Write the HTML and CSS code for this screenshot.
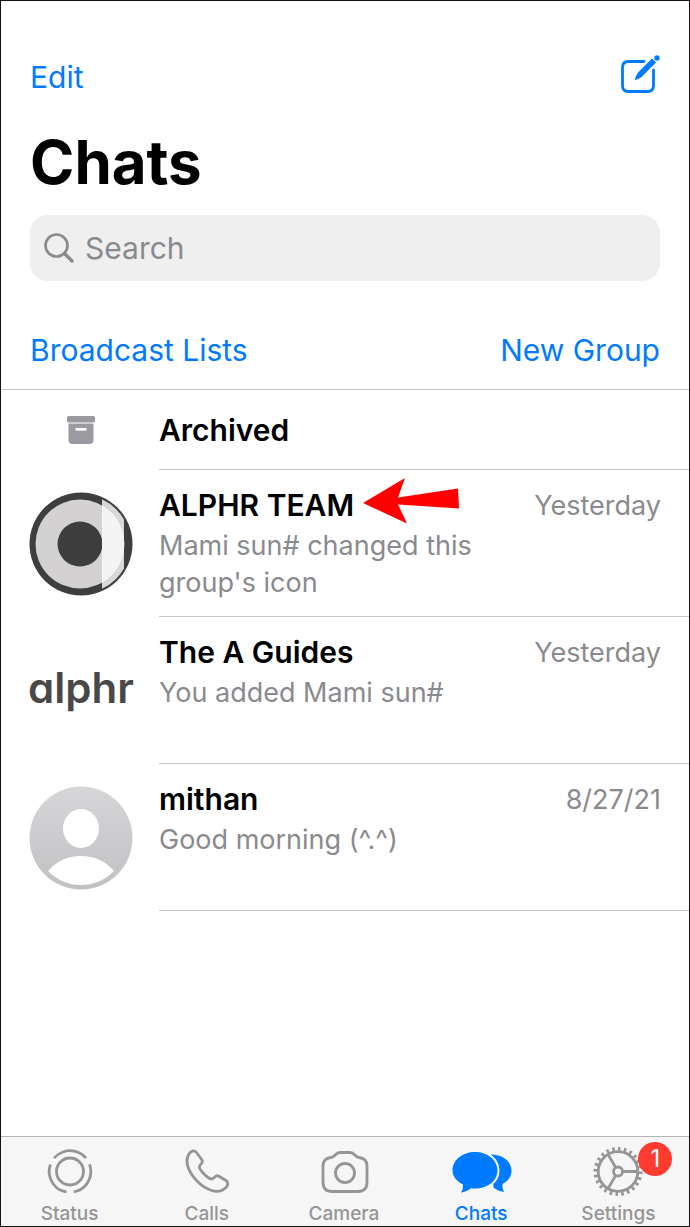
FILE: index.html
```html
<!DOCTYPE html>
<html lang="en">
<head>
    <meta charset="UTF-8">
    <meta name="viewport" content="width=device-width, initial-scale=1.0">
    <title>Chats</title>
    <link rel="stylesheet" href="styles.css">
</head>
<body>
    <header class="header">
        <div class="toolbar">
            <button type="button" class="link-button">Edit</button>
            <button type="button" class="icon-button" aria-label="New chat">
                <svg width="40" height="40" viewBox="0 0 40 40" fill="none" stroke="currentColor" stroke-width="2.800">
                    <path d="M24 7.500H8.500Q2.500 7.500 2.500 13.500V31.500Q2.500 37.500 8.500 37.500H27.500Q33.500 37.500 33.500 31.500V16" stroke-linecap="round"/>
                    <path d="M32.500 4L36.500 8L21.500 23Q19 25 15.500 26Q15 25.500 15 25Q16 21.500 18 18.500Z" fill="currentColor" stroke="none"/>
                    <path d="M32 3.500L37.500 9" stroke="#fff" stroke-width="1.200"/>
                    <circle cx="37" cy="4" r="2.700" fill="currentColor" stroke="none"/>
                </svg>
            </button>
        </div>
        <h1 class="title">Chats</h1>
        <label class="search">
            <svg width="30" height="30" viewBox="0 0 30 30" fill="none" stroke="currentColor" stroke-width="2.600" stroke-linecap="round">
                <circle cx="12.500" cy="12.500" r="11"/>
                <path d="M20.500 20.500L28 28" stroke-width="3.400"/>
            </svg>
            <input type="search" class="search-input" placeholder="Search" aria-label="Search">
        </label>
        <div class="actions">
            <button type="button" class="link-button">Broadcast Lists</button>
            <button type="button" class="link-button">New Group</button>
        </div>
    </header>

    <main class="chat-list">
        <div class="row">
            <div class="avatar">
                <svg width="28" height="28" viewBox="0 0 28 28" fill="#9a9aa0">
                    <rect x="0" y="0" width="28" height="6.500" rx="1.500"/>
                    <path d="M1.500 7.500H26.500V24Q26.500 28 22.500 28H5.500Q1.500 28 1.500 24Z"/>
                    <rect x="8.500" y="12" width="11" height="2.800" rx="1" fill="#fff"/>
                </svg>
            </div>
            <div class="row-body row-archived">
                <h2 class="name">Archived</h2>
            </div>
        </div>

        <div class="row">
            <div class="avatar">
                <svg width="104" height="104" viewBox="0 0 104 104">
                    <defs>
                        <clipPath id="band"><rect x="73" y="0" width="22" height="104"/></clipPath>
                    </defs>
                    <circle cx="52" cy="52" r="51.500" fill="#3e3e3e"/>
                    <circle cx="51" cy="52" r="44.500" fill="#d3d1d2"/>
                    <circle cx="51" cy="52" r="22.500" fill="#3e3e3e"/>
                    <g clip-path="url(#band)">
                        <circle cx="52" cy="52" r="49.500" fill="#d8d8d8"/>
                        <circle cx="51" cy="52" r="44.500" fill="#f5f4f5"/>
                    </g>
                </svg>
            </div>
            <div class="row-body">
                <h2 class="name">ALPHR TEAM
                    <svg class="arrow" width="98" height="46" viewBox="0 0 98 46" fill="#fe0000">
                        <path d="M0 25L42 0L35 19.500L95 10.500L96 30.500L35 26.500L44 45.500Z"/>
                    </svg>
                </h2>
                <p class="preview">Mami sun# changed this group's icon</p>
                <time class="time">Yesterday</time>
            </div>
        </div>

        <div class="row">
            <div class="avatar">
                <span class="wordmark">alphr</span>
            </div>
            <div class="row-body">
                <h2 class="name">The A Guides</h2>
                <p class="preview">You added Mami sun#</p>
                <time class="time">Yesterday</time>
            </div>
        </div>

        <div class="row">
            <div class="avatar">
                <svg width="104" height="104" viewBox="0 0 104 104">
                    <defs>
                        <linearGradient id="shade" x1="0" y1="0" x2="0" y2="1">
                            <stop offset="0" stop-color="#d6d6d8"/>
                            <stop offset="1" stop-color="#c1c1c3"/>
                        </linearGradient>
                    </defs>
                    <circle cx="52" cy="52" r="51.500" fill="url(#shade)"/>
                    <ellipse cx="52" cy="42.500" rx="18" ry="19.500" fill="#fff"/>
                    <path d="M19 85Q32 70 52 70T85 85Q71 99 52 99T19 85Z" fill="#fff"/>
                </svg>
            </div>
            <div class="row-body">
                <h2 class="name">mithan</h2>
                <p class="preview">Good morning (^.^)</p>
                <time class="time">8/27/21</time>
            </div>
        </div>
    </main>

    <nav class="tabs">
        <a href="#status" class="tab">
            <svg width="60" height="52" viewBox="0 0 60 52" fill="none" stroke="currentColor" stroke-width="2.800">
                <circle cx="30" cy="25.500" r="13.500"/>
                <circle cx="30" cy="25.500" r="20.800" pathLength="360" stroke-dasharray="100 20" transform="rotate(-20 30 25.500)"/>
            </svg>
            <span>Status</span>
        </a>
        <a href="#calls" class="tab">
            <svg width="60" height="52" viewBox="0 0 60 52" fill="none" stroke="currentColor" stroke-width="2.800" stroke-linejoin="round">
                <path d="M12 8C14 4.500 17.500 4 19.500 6.500L25 14C27 17.500 21.500 18 22.500 22C24 25.500 30.500 32 34 33C37.500 33.500 38 28.500 41.500 30L49 34.500C52 36.500 51 39.500 49 41.500C41 49.500 28.500 43.500 20.500 35.500C12 27 7 16 12 8Z"/>
            </svg>
            <span>Calls</span>
        </a>
        <a href="#camera" class="tab">
            <svg width="60" height="52" viewBox="0 0 60 52" fill="none" stroke="currentColor" stroke-width="2.800">
                <path d="M17 11.500C21.500 11 21 6.500 26 6.500H36C41 6.500 40.500 11 45 11.500C50.500 12 53 15 53 20V36C53 42.500 50 45.500 44 45.500H18C12 45.500 9 42.500 9 36V20C9 15 11.500 12 17 11.500Z"/>
                <circle cx="31" cy="27" r="9.500"/>
            </svg>
            <span>Camera</span>
        </a>
        <a href="#chats" class="tab active" aria-current="page">
            <svg width="60" height="52" viewBox="0 0 60 52" fill="currentColor">
                <path d="M40 8.500C52 8.500 60.500 15.500 60.500 25C60.500 30.500 57 35 51.500 38Q51 42 53 46Q46.500 45 42.500 41.500Z"/>
                <path d="M24 6C36.500 6 46.500 14 46.500 24.500S36.500 42.500 24 42.500Q21.500 42.500 20 42.200Q16 45.800 10 46.500Q12.500 42.500 12 38.500C6 35.500 1.500 30.500 1.500 24.500C1.500 14 11.500 6 24 6Z" stroke="#f6f6f6" stroke-width="4" paint-order="stroke"/>
            </svg>
            <span>Chats</span>
        </a>
        <a href="#settings" class="tab">
            <svg width="60" height="52" viewBox="0 0 60 52" fill="none" stroke="currentColor" stroke-width="2.800">
                <circle cx="30" cy="25.500" r="19.800"/>
                <circle cx="30" cy="25.500" r="22.500" pathLength="60" stroke-width="4" stroke-dasharray="1.100 1.400"/>
                <circle cx="30" cy="25.500" r="4.500"/>
                <path d="M34.500 25.500H49.500M27.700 21.600L20.200 8.600M27.700 29.400L20.200 42.400"/>
            </svg>
            <span>Settings</span>
            <span class="badge">1</span>
        </a>
    </nav>
</body>
</html>
```
FILE: styles.css
```css
* {
    box-sizing: border-box;
}
body {
    margin: 0;
    min-height: 100vh;
    display: flex;
    flex-direction: column;
    border: 1px solid #111;
    background: #fff;
    color: #000;
    font-family: Inter, Roboto, sans-serif;
    font-size: 30px;
    line-height: 36px;
}
h1, h2, p {
    margin: 0;
}
button {
    padding: 0;
    border: none;
    background: none;
    color: #007aff;
    font: inherit;
    cursor: pointer;
}
svg {
    display: block;
    flex-shrink: 0;
    overflow: visible;
}
.header {
    padding: 53px 29px 21px;
    border-bottom: 1px solid #c6c6c8;
}
.toolbar, .actions {
    display: flex;
    justify-content: space-between;
    align-items: center;
}
.toolbar {
    height: 46px;
}
.icon-button svg {
    margin-bottom: 6px;
}
.title {
    margin: 26px 0 17px;
    font-size: 60px;
    line-height: 72px;
    font-weight: 700;
}
.search {
    display: flex;
    align-items: center;
    gap: 11px;
    height: 66px;
    margin-bottom: 51px;
    padding: 0 14px;
    border-radius: 18px;
    background: #efeff0;
    color: #8a8a8e;
}
.search-input {
    flex: 1;
    min-width: 0;
    padding: 0;
    border: none;
    outline: none;
    background: none;
    color: #000;
    font: inherit;
    appearance: none;
}
.search-input::placeholder {
    color: #8a8a8e;
    opacity: 1;
}
.chat-list {
    flex: 1;
}
.row {
    display: flex;
    align-items: center;
    gap: 26px;
    padding-left: 28px;
}
.avatar {
    display: flex;
    justify-content: center;
    width: 104px;
    flex-shrink: 0;
}
.row-body {
    flex: 1;
    display: grid;
    grid-template-columns: 1fr auto;
    align-content: start;
    column-gap: 20px;
    row-gap: 3px;
    min-height: 147px;
    padding: 17px 28px 14px 0;
    border-bottom: 1px solid #c6c6c8;
}
.row-archived {
    min-height: 80px;
    padding-bottom: 17px;
    align-content: center;
}
.name {
    position: relative;
    justify-self: start;
    font-size: 30px;
    line-height: 36px;
    font-weight: 600;
}
.preview, .time {
    color: #8a8a8e;
    font-size: 27px;
    line-height: 37px;
}
.preview {
    grid-row: 2;
}
.time {
    grid-column: 2;
    grid-row: 1;
}
.arrow {
    position: absolute;
    top: -9px;
    left: 100%;
    margin-left: 9px;
}
.wordmark {
    padding-bottom: 6px;
    color: #484848;
    font-size: 42px;
    line-height: 52px;
    font-weight: 600;
    font-feature-settings: "cv11";
}
.tabs {
    display: grid;
    grid-template-columns: repeat(5, 1fr);
    height: 90px;
    padding-right: 2px;
    border-top: 1px solid #b4b4b6;
    background: #f6f6f6;
}
.tab {
    position: relative;
    display: flex;
    flex-direction: column;
    align-items: center;
    padding-top: 9px;
    color: #959595;
    font-size: 19px;
    line-height: 32px;
    font-weight: 500;
    text-decoration: none;
}
.tab.active {
    color: #007aff;
}
.badge {
    position: absolute;
    top: 5px;
    left: 50%;
    width: 34px;
    margin-left: 20px;
    border-radius: 17px;
    background: #ff3b30;
    color: #fff;
    font-size: 24px;
    line-height: 34px;
    font-weight: 400;
    text-align: center;
}
```
